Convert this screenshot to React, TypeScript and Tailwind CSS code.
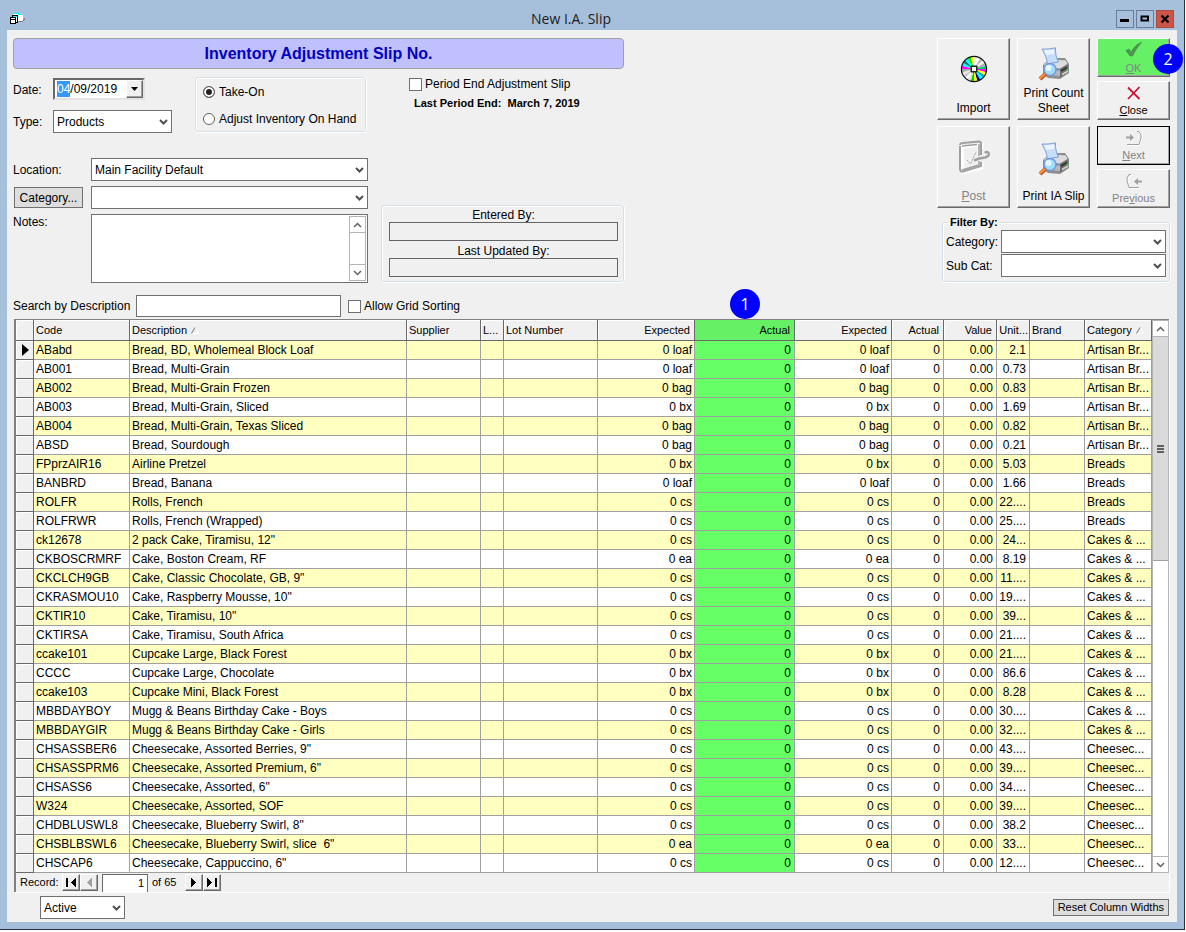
import React, { useEffect, useRef } from "react";
import clsx from "clsx";

type Row = [code: string, description: string, unit: string, cost: string, category: string];

const rows: Row[] = [
  ["ABabd", "Bread, BD, Wholemeal Block Loaf", "loaf", "2.1", "Artisan Br..."],
  ["AB001", "Bread, Multi-Grain", "loaf", "0.73", "Artisan Br..."],
  ["AB002", "Bread, Multi-Grain Frozen", "bag", "0.83", "Artisan Br..."],
  ["AB003", "Bread, Multi-Grain, Sliced", "bx", "1.69", "Artisan Br..."],
  ["AB004", "Bread, Multi-Grain, Texas Sliced", "bag", "0.82", "Artisan Br..."],
  ["ABSD", "Bread, Sourdough", "bag", "0.21", "Artisan Br..."],
  ["FPprzAIR16", "Airline Pretzel", "bx", "5.03", "Breads"],
  ["BANBRD", "Bread, Banana", "loaf", "1.66", "Breads"],
  ["ROLFR", "Rolls, French", "cs", "22....", "Breads"],
  ["ROLFRWR", "Rolls, French (Wrapped)", "cs", "25....", "Breads"],
  ["ck12678", '2 pack Cake, Tiramisu, 12"', "cs", "24...", "Cakes & ..."],
  ["CKBOSCRMRF", "Cake, Boston Cream, RF", "ea", "8.19", "Cakes & ..."],
  ["CKCLCH9GB", 'Cake, Classic Chocolate, GB, 9"', "cs", "11....", "Cakes & ..."],
  ["CKRASMOU10", 'Cake, Raspberry Mousse, 10"', "cs", "19....", "Cakes & ..."],
  ["CKTIR10", 'Cake, Tiramisu, 10"', "cs", "39...", "Cakes & ..."],
  ["CKTIRSA", "Cake, Tiramisu, South Africa", "cs", "21....", "Cakes & ..."],
  ["ccake101", "Cupcake Large, Black Forest", "bx", "21....", "Cakes & ..."],
  ["CCCC", "Cupcake Large, Chocolate", "bx", "86.6", "Cakes & ..."],
  ["ccake103", "Cupcake Mini, Black Forest", "bx", "8.28", "Cakes & ..."],
  ["MBBDAYBOY", "Mugg & Beans Birthday Cake - Boys", "cs", "30....", "Cakes & ..."],
  ["MBBDAYGIR", "Mugg & Beans Birthday Cake - Girls", "cs", "32....", "Cakes & ..."],
  ["CHSASSBER6", 'Cheesecake, Assorted Berries, 9"', "cs", "43....", "Cheesec..."],
  ["CHSASSPRM6", 'Cheesecake, Assorted Premium, 6"', "cs", "39....", "Cheesec..."],
  ["CHSASS6", 'Cheesecake, Assorted, 6"', "cs", "34....", "Cheesec..."],
  ["W324", "Cheesecake, Assorted, SOF", "cs", "39....", "Cheesec..."],
  ["CHDBLUSWL8", 'Cheesecake, Blueberry Swirl, 8"', "cs", "38.2", "Cheesec..."],
  ["CHSBLBSWL6", 'Cheesecake, Blueberry Swirl, slice  6"', "ea", "33...", "Cheesec..."],
  ["CHSCAP6", 'Cheesecake, Cappuccino, 6"', "cs", "12....", "Cheesec..."],
];

const columns = [
  { label: "", width: "w-[18px]" },
  { label: "Code", width: "w-[96px]" },
  { label: "Description", width: "", sorted: true },
  { label: "Supplier", width: "w-[74px]" },
  { label: "L...", width: "w-[23px]" },
  { label: "Lot Number", width: "w-[94px]" },
  { label: "Expected", width: "w-[97px]", right: true },
  { label: "Actual", width: "w-[100px]", right: true, marked: true },
  { label: "Expected", width: "w-[97px]", right: true },
  { label: "Actual", width: "w-[52px]", right: true },
  { label: "Value", width: "w-[53px]", right: true },
  { label: "Unit...", width: "w-[33px]", right: true },
  { label: "Brand", width: "w-[55px]" },
  { label: "Category", width: "w-[67px]", sorted: true },
];

/* ---------- icons ---------- */

const FormIcon = () => (
  <svg width="16" height="14" viewBox="0 0 16 14" shapeRendering="crispEdges">
    <path d="M3 1h4v1h3v1h3v6H8V4H3z" fill="#fff" />
    <path d="M3 1h3v1H3zM6 1h3v1H6zM8 2h4v1H8z" fill="#0ff" />
    <path d="M13 7h1v-1h1v2h-1v1h-1zM8 9h5v1H8z" fill="#808080" />
    <path d="M2 3h6v8H6v1H0V5h2z" fill="#000" />
    <path d="M3 5h4v5H6V5H3zM1 8h4v3H1zM1 6h4v1H1z" fill="#fff" />
    <path d="M3 4h4v1H3z" fill="#0ff" />
  </svg>
);

const Chevron = ({ up = false, bold = false, className = "" }: { up?: boolean; bold?: boolean; className?: string }) => (
  <svg width="9" height="6" viewBox="0 0 9 6" className={className} fill="none">
    <path d={up ? "M1 5L4.5 1.5L8 5" : "M1 1L4.5 4.5L8 1"} stroke="currentColor" strokeWidth={bold ? 2 : 1.5} />
  </svg>
);

const discColors = [
  "#eee", "#fff", "#b8b8b8", "#f4f4f4", "#b0b0b0", "#0c8", "#f0f", "#ff0", "#00b0b0", "#0ff", "#0000b0", "#ff0",
  "#0c0", "#e0e0e0", "#fff", "#c8c8c8", "#e8e8e8", "#a8a8a8", "#f0f", "#0ff", "#008080", "#0ff", "#0e0", "#ff0",
];

const DiscIcon = () => (
  <svg width="28" height="28" viewBox="-14 -14 28 28" className="mb-1">
    {discColors.map((color, i) => {
      const a = ((i * 15 - 90) * Math.PI) / 180;
      const b = (((i + 1) * 15 - 90) * Math.PI) / 180;
      return (
        <path
          key={i}
          fill={color}
          d={`M0 0L${12.5 * Math.cos(a)} ${12.5 * Math.sin(a)}A12.5 12.5 0 0 1 ${12.5 * Math.cos(b)} ${12.5 * Math.sin(b)}Z`}
        />
      );
    })}
    <circle r="12.6" fill="none" stroke="#111" strokeWidth="1.2" />
    <rect x="-3.5" y="-3.5" width="7" height="7" rx="1" fill="#222" />
    <rect x="-2" y="-2" width="4" height="4" fill="#fff" />
  </svg>
);

const PrinterIcon = () => (
  <svg width="32" height="34" viewBox="0 0 32 34">
    <path d="M13 14L19 11H27L31 17V26L22 32L10 31L5 27V18Z" fill="#8d8d8d" />
    <path d="M6 17L13 12L28 13L30 17L22 22L6 20Z" fill="#dcdcdc" stroke="#777" strokeWidth=".6" />
    <path d="M22 22L30 17.5V25L22 30.5Z" fill="#6b6b6b" />
    <path d="M10 26L22 23V29L11 28Z" fill="#b9b9b9" />
    <path d="M23 24L29 20.5" stroke="#333" strokeWidth="1.5" />
    <path d="M24 27.5L30 24" stroke="#d5d5d5" strokeWidth="1.5" />
    <path d="M28.5 22.5h2" stroke="#4c4" strokeWidth="1.5" />
    <path d="M4 2C9 2.5 14 1.5 17.5 .8C17 6 18.5 11 20.5 15L9 17C9.5 12 6.5 7 4 2Z" fill="#c6dcfb" stroke="#7d9ed6" />
    <path d="M6 3C10 3.4 13 2.6 16 2.2L16.5 7L8.5 8Z" fill="#eaf3ff" />
    <circle cx="12" cy="22.5" r="6" fill="#9fdcff" stroke="#6f9be0" strokeWidth="1.5" />
    <circle cx="10.5" cy="21" r="3" fill="#e4f8ff" />
    <path d="M7.5 27L2 32" stroke="#b9541f" strokeWidth="4" />
    <path d="M7 27L1.5 31.5" stroke="#f58a3c" strokeWidth="2.5" />
  </svg>
);

const PostIcon = () => (
  <svg width="34" height="34" viewBox="0 0 34 34" fill="none" className="mb-1">
    <path d="M4 6L24 4V8M4 6L5 32L24 27V22" stroke="#fff" strokeWidth="3" transform="translate(1 1)" />
    <path d="M3 5Q3 3 6 3L22 1.5Q24 1.5 24 4V15M24 22V26L6 31.5Q3 32 3 29V6" stroke="#a0a0a0" strokeWidth="2" />
    <path d="M5 6L20 4.5M22 4V16M22 21V25L5 30" stroke="#a0a0a0" strokeWidth="1.5" />
    <path d="M10 20L13.5 24L19 12" stroke="#a0a0a0" strokeDasharray="2 1" />
    <path d="M17 20.5L22 18.5L28 17.5Q33 16 31.5 12.5M28 13Q29 11.5 31.5 12.5" stroke="#a0a0a0" strokeWidth="2.5" />
  </svg>
);

const CheckIcon = () => (
  <svg width="18" height="15" viewBox="0 0 18 15" className="mb-1">
    <path d="M1 8.5L4 7L6 10.5C9 5 12 2 16.5 .5C12.5 5 10 9 7.500 14H5Z" fill="#509650" stroke="#3d803d" strokeWidth=".6" />
  </svg>
);

const CrossIcon = () => (
  <svg width="14" height="14" viewBox="0 0 14 14" fill="none" className="mb-0.5">
    <path d="M1 1.500L12.500 13M12.500 1L1 13" stroke="#cc1236" strokeWidth="1.8" />
  </svg>
);

const NextIcon = () => (
  <svg width="18" height="16" viewBox="0 0 18 16" fill="none" className="mb-0.5">
    <path d="M2 15.500H14.500L17 9V6L15 2" stroke="#fff" />
    <path d="M12 1.500H14L16 5V8L14 14.500H2" stroke="#a0a0a0" />
    <path d="M1 7.500H5" stroke="#a0a0a0" strokeWidth="2" />
    <path d="M5 4L9 7.500L5 11Z" fill="#a0a0a0" />
  </svg>
);

const PreviousIcon = () => (
  <svg width="18" height="16" viewBox="0 0 18 16" fill="none" className="mb-0.5">
    <path d="M7 2.500H5L3 6V9L5 15.500H15" stroke="#fff" />
    <path d="M6 1.500H4L2 5V8L4 14.500H14" stroke="#a0a0a0" />
    <path d="M12 8.500H17" stroke="#a0a0a0" strokeWidth="2" />
    <path d="M13 5L9 8.500L13 12Z" fill="#a0a0a0" />
  </svg>
);

const SortMark = () => (
  <svg width="8" height="7" viewBox="0 0 8 7" className="shrink-0" fill="none">
    <path d="M4 .5L7.500 6.500H1" stroke="#fff" />
    <path d="M.5 6.500L4 .5" stroke="#909090" strokeWidth="1.2" />
  </svg>
);

const NavGlyph = ({ bar = false, back = false, className = "text-black" }: { bar?: boolean; back?: boolean; className?: string }) => (
  <svg
    width="12"
    height="9"
    viewBox="0 0 12 9"
    fill="currentColor"
    className={clsx(className, back && "rotate-180")}
    shapeRendering="crispEdges"
  >
    <path d={bar ? "M1 0L6 4.5L1 9ZM9 0h2v9H9z" : "M3 0L8 4.5L3 9Z"} />
  </svg>
);

/* ---------- controls ---------- */

const Combo = ({ label, value = "", className = "" }: { label: string; value?: string; className?: string }) => (
  <div className={clsx("relative h-[23px]", className)}>
    <select
      aria-label={label}
      defaultValue={value}
      className="block h-full w-full appearance-none border border-[#707070] bg-white pl-[3px] pr-4 text-black outline-none"
    >
      <option>{value}</option>
    </select>
    <Chevron bold className="pointer-events-none absolute right-1 top-[9px] text-[#505050]" />
  </div>
);

const raised =
  "border border-t-white border-l-white border-r-[#696969] border-b-[#696969] shadow-[inset_-1px_-1px_0_#a0a0a0]";

const ToolButton = ({
  icon,
  children,
  disabled = false,
  className = "",
}: {
  icon: React.ReactNode;
  children: React.ReactNode;
  disabled?: boolean;
  className?: string;
}) => (
  <button
    type="button"
    disabled={disabled}
    className={clsx(raised, "flex flex-col items-center", disabled ? "text-[#838383]" : "text-black", className)}
  >
    <span className="flex flex-1 items-center">{icon}</span>
    <span className="block">{children}</span>
  </button>
);

const large = "h-[82px] pb-[3px] pt-0.5 leading-[15px]";
const small = "h-[39px] pb-px pt-[3px] text-[11px] leading-[15px]";

const Bubble = ({ children, className }: { children: React.ReactNode; className: string }) => (
  <span
    className={clsx(
      "absolute z-10 flex size-[30px] items-center justify-center rounded-full bg-[#0000ff] font-['Open_Sans',sans-serif] text-base text-white",
      className
    )}
  >
    {children}
  </span>
);

const groupBox = "rounded-[3px] border border-[#d5dfe5] shadow-[inset_1px_1px_0_#fff,0_1px_0_#fff,1px_0_0_#fff]";

const ScrollBar = ({ thumb = false }: { thumb?: boolean }) => (
  <div className="flex w-[17px] shrink-0 flex-col border border-[#b4b4b4] bg-white text-[#606060]">
    <button type="button" aria-label="Scroll up" className="flex h-4 items-center justify-center border-b border-[#b4b4b4]">
      <Chevron up />
    </button>
    <div className="flex-1">
      {thumb && (
        <div className="flex h-[224px] flex-col items-center justify-center gap-px border-b border-[#a0a0a0] bg-[#dadada]">
          <span className="h-0.5 w-[7px] bg-[#606060]" />
          <span className="h-0.5 w-[7px] bg-[#606060]" />
          <span className="h-0.5 w-[7px] bg-[#606060]" />
        </div>
      )}
    </div>
    <button type="button" aria-label="Scroll down" className="flex h-4 items-center justify-center border-t border-[#b4b4b4]">
      <Chevron />
    </button>
  </div>
);

const DateField = () => {
  const ref = useRef<HTMLInputElement>(null);

  // month part is selected when the form opens
  useEffect(() => {
    ref.current?.focus();
    ref.current?.setSelectionRange(0, 2);
  }, []);

  return (
    <div className="flex h-[22px] w-[92px] border-2 border-[#696969] border-b-[#e3e3e3] border-r-[#e3e3e3] bg-white">
      <input
        id="date"
        ref={ref}
        defaultValue="04/09/2019"
        className="min-w-0 flex-1 pl-0.5 pt-px outline-none selection:bg-[#3399ff] selection:text-white"
      />
      <button type="button" aria-label="Open calendar" className={clsx(raised, "flex w-[17px] items-center justify-center bg-[#f0f0f0]")}>
        <svg width="7" height="4" viewBox="0 0 7 4">
          <path d="M0 0h7L3.5 4z" />
        </svg>
      </button>
    </div>
  );
};

/* ---------- sections ---------- */

const TitleBar = () => (
  <header className="flex h-[30px] items-center px-[3px] pt-[7px]">
    <div className="flex-1">
      <FormIcon />
    </div>
    <h1 className="mr-[42px] font-['Open_Sans',sans-serif] text-sm leading-5 text-[#1c1c1c]">New I.A. Slip</h1>
    <div className="flex flex-1 justify-end gap-0.5">
      <button type="button" aria-label="Minimize" className="flex h-[18px] w-[18px] items-center justify-center border border-[#6b7d99]">
        <svg width="10" height="10" viewBox="0 0 10 10"><path d="M0 5h9v3H0z" /></svg>
      </button>
      <button type="button" aria-label="Maximize" className="flex h-[18px] w-[18px] items-center justify-center border border-[#6b7d99]">
        <svg width="10" height="10" viewBox="0 0 10 10" fill="none"><path d="M1.5 2.500h6.500v4H1.500z" stroke="#000" strokeWidth="2" /></svg>
      </button>
      <button type="button" aria-label="Close window" className="flex h-[18px] w-[18px] items-center justify-center border border-[#a94c40] bg-[#cb5647]">
        <svg width="10" height="10" viewBox="0 0 10 10" fill="none"><path d="M1.500 1.500l7 7m0-7l-7 7" stroke="#000" strokeWidth="2.200" /></svg>
      </button>
    </div>
  </header>
);

const SlipForm = () => (
  <div className="w-[611px] shrink-0">
    <h2 className="flex h-[31px] items-center justify-center rounded-[4px] border border-[#a0a0a0] bg-[#c0c0ff] text-base font-bold text-[#0000c0]">
      Inventory Adjustment Slip No.
    </h2>

    <div className="mt-2 flex items-start">
      <div className="flex w-[182px] flex-col gap-2.5">
        <div className="flex h-[23px] items-center">
          <label htmlFor="date" className="w-10 pt-0.5">Date:</label>
          <DateField />
        </div>
        <div className="flex items-center">
          <span className="w-10">Type:</span>
          <Combo label="Type" value="Products" className="w-[119px]" />
        </div>
      </div>

      <div className={clsx(groupBox, "flex h-[55px] w-[171px] flex-col justify-between px-[7px] pb-[3px] pt-[5px]")}>
        {["Take-On", "Adjust Inventory On Hand"].map((text, i) => (
          <label key={text} className="flex items-center gap-1 whitespace-nowrap leading-[18px]">
            <input
              type="radio"
              name="mode"
              defaultChecked={i === 0}
              className="size-3 shrink-0 appearance-none rounded-full border border-[#606060] bg-white checked:bg-[#222] checked:shadow-[inset_0_0_0_2px_#fff]"
            />
            {text}
          </label>
        ))}
      </div>

      <div className="ml-[43px]">
        <label className="flex items-center gap-[3px] leading-[14px]">
          <input type="checkbox" className="size-[13px] appearance-none border border-[#707070] bg-white" />
          Period End Adjustment Slip
        </label>
        <p className="ml-[5px] mt-[5px] whitespace-pre text-[11px] font-bold leading-[15px]">Last Period End:  March 7, 2019</p>
      </div>
    </div>

    <div className="mt-[25px] flex items-end gap-[13px]">
      <div className="grid w-[355px] grid-cols-[78px_1fr] gap-y-[5px]">
        <span className="self-center">Location:</span>
        <Combo label="Location" value="Main Facility Default" />
        <button type="button" className="ml-px h-[21px] w-[69px] self-center border border-[#707070] bg-[#dddddd]">
          Category...
        </button>
        <Combo label="Category" />
        <label htmlFor="notes" className="leading-4">Notes:</label>
        <div className="flex h-[69px] border border-[#707070] bg-white p-px">
          <textarea id="notes" className="min-w-0 flex-1 resize-none outline-none" />
          <ScrollBar />
        </div>
      </div>
      <div className={clsx(groupBox, "mb-px flex h-[77px] flex-1 flex-col pl-[7px] pr-[5px] pt-[3px] text-center")}>
        <label htmlFor="entered" className="block leading-[13px]">Entered By:</label>
        <input id="entered" readOnly className="h-[19px] w-full border border-[#646464]" />
        <label htmlFor="updated" className="mt-1 block leading-[13px]">Last Updated By:</label>
        <input id="updated" readOnly className="h-[19px] w-full border border-[#646464]" />
      </div>
    </div>

    <div className="mt-3 flex h-[22px] items-center">
      <label htmlFor="search" className="w-[123px]">Search by Description</label>
      <input id="search" className="h-full w-[205px] border border-[#707070] bg-white px-1 outline-none" />
      <label className="ml-[7px] flex items-center gap-[3px]">
        <input type="checkbox" className="size-[13px] appearance-none border border-[#707070] bg-white" />
        Allow Grid Sorting
      </label>
    </div>
  </div>
);

const Toolbar = () => (
  <div className="flex flex-col items-end">
    <div className="grid grid-cols-[73px_73px_73px] gap-x-[7px] gap-y-1.5">
      <ToolButton icon={<DiscIcon />} className={large}>Import</ToolButton>
      <ToolButton icon={<PrinterIcon />} className={large}>Print Count<br />Sheet</ToolButton>
      <div className="flex flex-col gap-1">
        <div className="relative flex flex-col">
          <ToolButton icon={<CheckIcon />} disabled className={clsx(small, "border-t-[#66f066] border-l-[#66f066] bg-[#66f066] text-[#4f8f4f]")}>
            <u>O</u>K
          </ToolButton>
          <Bubble className="-right-[13px] top-1.5">2</Bubble>
        </div>
        <ToolButton icon={<CrossIcon />} className={small}><u>C</u>lose</ToolButton>
      </div>
      <ToolButton icon={<PostIcon />} disabled className={large}><u>P</u>ost</ToolButton>
      <ToolButton icon={<PrinterIcon />} className={large}>Print IA Slip</ToolButton>
      <div className="flex flex-col gap-1">
        <ToolButton
          icon={<NextIcon />}
          disabled
          className={clsx(small, "outline outline-1 -outline-offset-1 outline-black")}
        >
          <u>N</u>ext
        </ToolButton>
        <ToolButton icon={<PreviousIcon />} disabled className={small}>Pre<u>v</u>ious</ToolButton>
      </div>
    </div>

    <fieldset className={clsx(groupBox, "mt-1.5 w-[228px] px-[3px] pb-1")}>
      <legend className="ml-0.5 bg-[#f0f0f0] px-0.5 text-[11px] font-bold leading-4">Filter By:</legend>
      <div className="grid grid-cols-[55px_1fr] items-center gap-y-px">
        <span>Category:</span>
        <Combo label="Filter category" />
        <span>Sub Cat:</span>
        <Combo label="Filter sub category" />
      </div>
    </fieldset>
  </div>
);

const cell = "h-[19px] whitespace-pre border-b border-r border-[#a0a0a0] p-0 leading-[18px]";

const Grid = () => (
  <div className="flex">
    <table className="w-full table-fixed border-separate border-spacing-0">
      <colgroup>
        {columns.map((c, i) => (
          <col key={i} className={c.width} />
        ))}
      </colgroup>
      <thead>
        <tr>
          {columns.map((c, i) => (
            <th
              key={i}
              className={clsx(
                "relative h-[21px] whitespace-nowrap border-b border-r border-[#696969] p-0 text-[11px] font-normal leading-5 shadow-[inset_1px_1px_0_#fff]",
                c.right ? "text-right" : "pl-0.5 text-left",
                c.right && (c.label === "Unit..." ? "pr-px" : "pr-1"),
                c.marked && "bg-[#66f066] shadow-none"
              )}
            >
              <span className="inline-flex items-center gap-1">
                {c.label}
                {c.sorted && <SortMark />}
              </span>
              {c.marked && <Bubble className="-top-[31px] left-[35px]">1</Bubble>}
            </th>
          ))}
        </tr>
      </thead>
      <tbody>
        {rows.map(([code, description, unit, cost, category], i) => (
          <tr key={code} className={i % 2 === 0 ? "bg-[#ffffc0]" : "bg-white"}>
            <td className="h-[19px] border-b border-r border-[#696969] bg-[#f0f0f0] p-0 shadow-[inset_1px_1px_0_#fff]">
              {i === 0 && (
                <svg width="8" height="12" viewBox="0 0 8 12" className="ml-1.5">
                  <path d="M0 0L7 6L0 12Z" />
                </svg>
              )}
            </td>
            <td className={clsx(cell, "pl-0.5")}>{code}</td>
            <td className={clsx(cell, "pl-0.5")}>{description}</td>
            <td className={cell} />
            <td className={cell} />
            <td className={cell} />
            <td className={clsx(cell, "pr-0.5 text-right")}>0 {unit}</td>
            <td className={clsx(cell, "border-[#5f9f5f] bg-[#66ff66] pr-[3px] text-right")}>0</td>
            <td className={clsx(cell, "pr-0.5 text-right")}>0 {unit}</td>
            <td className={clsx(cell, "pr-[3px] text-right")}>0</td>
            <td className={clsx(cell, "pr-[3px] text-right")}>0.00</td>
            <td className={clsx(cell, "pr-[3px] text-right")}>{cost}</td>
            <td className={cell} />
            <td className={clsx(cell, "pl-0.5")}>{category}</td>
          </tr>
        ))}
      </tbody>
    </table>
    <ScrollBar thumb />
  </div>
);

const navButton = "flex h-[17px] w-[18px] items-center justify-center";

const RecordBar = () => (
  <div className="flex h-[19px] items-center pl-1 text-[11px]">
    <label htmlFor="record" className="w-[42px]">Record:</label>
    <button type="button" aria-label="First record" className={clsx(raised, navButton)}><NavGlyph bar back /></button>
    <button type="button" aria-label="Previous record" className={clsx(raised, navButton)}>
      <NavGlyph back className="text-[#a0a0a0]" />
    </button>
    <input id="record" defaultValue="1" className="ml-1 h-[18px] w-[46px] border border-b-0 border-[#696969] bg-white pr-[3px] text-right outline-none" />
    <span className="ml-1 w-[33px]">of 65</span>
    <button type="button" aria-label="Next record" className={clsx(raised, navButton)}><NavGlyph /></button>
    <button type="button" aria-label="Last record" className={clsx(raised, navButton)}><NavGlyph bar /></button>
  </div>
);

export default function App() {
  return (
    <div className="bg-white pb-0.5 pr-px font-['Liberation_Sans',Arial,sans-serif] text-xs text-black">
      <div className="border-b border-r border-[#26303c] bg-[#a6c0dc] px-[7px] pb-[7px]">
        <TitleBar />
        <main className="bg-[#f0f0f0] pb-[3px] pl-1.5 pr-[7px] pt-2">
          <div className="flex justify-between">
            <SlipForm />
            <Toolbar />
          </div>
          <section className="ml-px mt-0.5 border-b border-r border-b-white border-r-white">
            <div className="border-l-2 border-t border-[#808080]">
              <Grid />
              <RecordBar />
            </div>
          </section>
          <footer className="mt-[3px] flex items-center justify-between pl-[27px] pr-px">
            <Combo label="Status" value="Active" className="w-[85px]" />
            <button type="button" className="h-[17px] border border-[#707070] bg-[#dddddd] px-1 text-[11px] leading-[15px]">
              Reset Column Widths
            </button>
          </footer>
        </main>
      </div>
    </div>
  );
}
